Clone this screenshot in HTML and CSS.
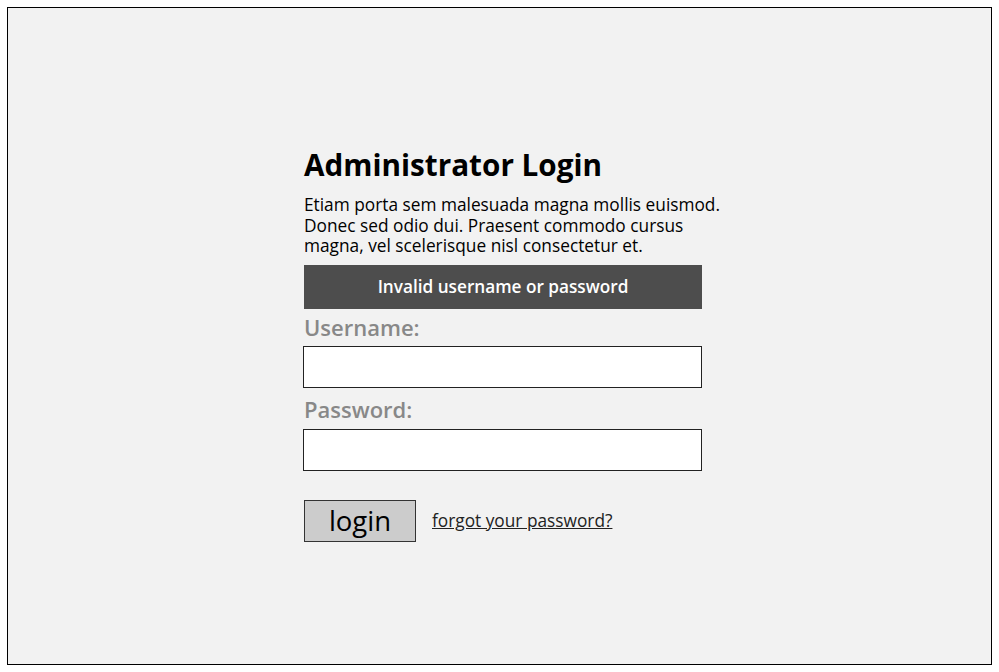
FILE: index.html
```html
<!DOCTYPE html>
<html>
<head>
<meta charset="utf-8">
<link rel="stylesheet" href="styles.css">
</head>
<body>
<div class="frame">
  <div class="login">
    <h1 class="title">Administrator Login</h1>
    <p class="intro">Etiam porta sem malesuada magna mollis euismod. Donec sed odio dui. Praesent commodo cursus magna, vel scelerisque nisl consectetur et.</p>
    <div class="error">Invalid username or password</div>
    <label class="label">Username:</label>
    <div class="input"></div>
    <label class="label label-pw">Password:</label>
    <div class="input input-pw"></div>
    <div class="actions">
      <button class="btn">login</button>
      <a class="forgot" href="#">forgot your password?</a>
    </div>
  </div>
</div>
</body>
</html>
```
FILE: styles.css
```css
* { box-sizing: border-box; }
html, body { margin: 0; padding: 0; background: #fff; }
body { font-family: "Open Sans", "Liberation Sans", sans-serif; color: #000; }
.frame {
  margin: 7px;
  width: 985px;
  height: 658px;
  border: 1.5px solid #000;
  background: #f2f2f2;
  padding: 139px 0 0 296px;
}
.login { width: 440px; display: flex; flex-direction: column; align-items: flex-start; }
.title { margin: 0; font-size: 29.7px; line-height: 36px; font-weight: 700; }
.intro { margin: 12px 0 0; font-size: 17.3px; line-height: 20.5px; width: 440px; }
.error {
  margin-top: 8px;
  width: 398px; height: 44px;
  background: #4d4d4d; color: #fff;
  display: flex; align-items: center; justify-content: center;
  font-size: 17.2px; font-weight: 600;
}
.label { color: #888; font-size: 22px; font-weight: 600; line-height: 28px; margin-top: 4px; }
.label-pw { margin-top: 7px; }
.input { width: 399px; height: 42px; background: #fff; border: 1.5px solid #222; margin-top: 5px; margin-left: -1px; }
.input-pw { margin-top: 6px; }
.actions { display: flex; align-items: center; margin-top: 29px; gap: 16px; }
.btn {
  width: 112px; height: 42px;
  background: #ccc; border: 1.5px solid #333;
  font-family: inherit; font-size: 27.5px; font-weight: 500; color: #000;
  padding: 0; line-height: 38px;
}
.forgot { color: #222; font-size: 17.3px; text-decoration: underline; }
```
